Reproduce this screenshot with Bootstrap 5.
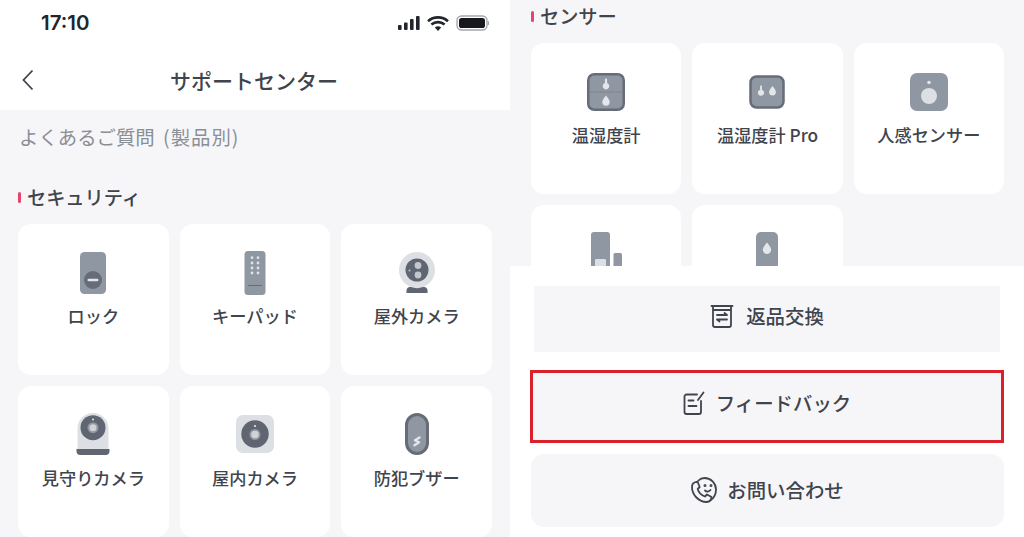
<!DOCTYPE html>
<html lang="ja">

<head>
    <meta charset="UTF-8">
    <meta name="viewport" content="width=device-width, initial-scale=1.0">
    <title>サポートセンター</title>
    <link href="https://cdn.jsdelivr.net/npm/bootstrap@5.3.2/dist/css/bootstrap.min.css" rel="stylesheet">
    <style>
        html, body { height: 537px; overflow: hidden; }
        body { background: #f6f6f9; color: #3f444d; font-family: "Noto Sans CJK JP", "Noto Sans", sans-serif; font-weight: 500; }
        .pane-left { width: 510px; height: 537px; overflow: hidden; }
        .pane-right { width: 514px; height: 537px; overflow: hidden; }
        .status-row { height: 46px; padding: 0 21px 0 41px; }
        .clock { font-family: Inter, sans-serif; font-size: 20.5px; font-weight: 600; color: #22252b; line-height: 1; }
        .nav-row { height: 64px; padding: 10px 0 6px 21px; }
        .nav-side { width: 112px; }
        .nav-title { width: 240px; margin-left: 1px; font-size: 21px; line-height: 1; }
        .faq-title { font-size: 19.4px; font-weight: 400; line-height: 27px; color: #8a8e96; padding: 13px 0 0 19px; word-spacing: 4px; }
        .faq-kind { letter-spacing: 1px; }
        .sec-title { font-size: 19.2px; line-height: 24px; margin-bottom: 15px; }
        .sec-tick { width: 3px; height: 11px; border-radius: 2px; background: #e8436b; margin-right: 6px; }
        .left-body { padding: 35px 18px 0; }
        .right-top { height: 266px; overflow: hidden; padding: 4px 20px 0 21px; }
        .tile-grid { display: grid; grid-template-columns: repeat(3, 1fr); gap: 11px; }
        .tile { height: 151px; border: 0; border-radius: 13px; padding-top: 26px; background: #fff; }
        .tile svg { display: block; flex: none; }
        .tile-label { font-size: 17.2px; line-height: 24px; margin-top: 6px; color: #3f444d; }
        .sheet { height: 271px; padding-top: 20px; }
        .act { height: 73px; background: #f6f6f9; font-size: 19.4px; line-height: 1; color: #3f444d; }
        .act-return { height: 66px; margin: 0 24px 18px; gap: 12px; padding-bottom: 6px; }
        .act-feedback { margin: 0 20px 11px; gap: 11px; border: 3px solid #d9202b; padding-bottom: 8px; }
        .act-contact { margin: 0 20px 0 21px; gap: 10px; border-radius: 13px; padding-bottom: 2px; }
    </style>
</head>

<body>
    <div class="d-flex">
        <div class="pane-left">
            <div class="bg-white">
                <div class="status-row d-flex align-items-center justify-content-between">
                    <span class="clock">17:10</span>
                    <svg width="92" height="18" viewBox="0 0 92 18">
                        <g fill="#22252b">
                            <rect x="1" y="11" width="3.600" height="5" rx="1"/>
                            <rect x="7" y="8.500" width="3.600" height="7.500" rx="1"/>
                            <rect x="13" y="5" width="3.600" height="11" rx="1"/>
                            <rect x="19" y="2" width="3.600" height="14" rx="1"/>
                        </g>
                        <path d="M31 7.200a15 15 0 0 1 20 0M34.400 10.600a10 10 0 0 1 13.200 0" fill="none" stroke="#22252b" stroke-width="2.600"/>
                        <path d="M37.800 13.600a5 5 0 0 1 6.400 0L41 17z" fill="#22252b"/>
                        <rect x="60" y="2" width="30" height="14" rx="4.500" fill="none" stroke="#a5a7ab" stroke-width="1.400"/>
                        <rect x="62" y="4" width="26" height="10" rx="2.600" fill="#16181c"/>
                        <rect x="90.800" y="7" width="1.200" height="4" rx=".6" fill="#a5a7ab"/>
                    </svg>
                </div>
                <div class="nav-row d-flex align-items-center">
                    <div class="nav-side d-flex">
                        <svg width="13" height="22" viewBox="0 0 13 22"><path d="M11.500 1.500 2.500 11l9 9.500" fill="none" stroke="#3f444d" stroke-width="1.800"/></svg>
                    </div>
                    <div class="nav-title text-center">サポートセンター</div>
                </div>
            </div>

            <div class="faq-title">よくあるご質問 <span class="faq-kind">(製品別)</span></div>

            <div class="left-body">
                <div class="sec-title d-flex align-items-center"><span class="sec-tick"></span>セキュリティ</div>
                <div class="tile-grid">
                    <div class="card tile align-items-center">
                        <svg width="48" height="48" viewBox="0 0 48 48">
                            <rect x="11" y="2" width="26" height="42" rx="4.500" fill="#8f97a3"/>
                            <circle cx="24" cy="30" r="9" fill="#666d79"/>
                            <rect x="18.500" y="28.700" width="11" height="2.600" rx="1.300" fill="#e4e6e9"/>
                        </svg>
                        <div class="tile-label">ロック</div>
                    </div>
                    <div class="card tile align-items-center">
                        <svg width="48" height="48" viewBox="0 0 48 48">
                            <rect x="13.500" y="1" width="21" height="44" rx="3.500" fill="#8f97a3"/>
                            <g fill="#dfe2e6">
                                <circle cx="21" cy="7.700" r="1.400"/><circle cx="27" cy="7.700" r="1.400"/>
                                <circle cx="21" cy="13" r="1.400"/><circle cx="27" cy="13" r="1.400"/>
                                <circle cx="21" cy="18" r="1.400"/><circle cx="27" cy="18" r="1.400"/>
                                <circle cx="21" cy="23" r="1.400"/><circle cx="27" cy="23" r="1.400"/>
                            </g>
                            <rect x="17" y="35" width="14" height="1" fill="#666d79"/>
                        </svg>
                        <div class="tile-label">キーパッド</div>
                    </div>
                    <div class="card tile align-items-center">
                        <svg width="48" height="48" viewBox="0 0 48 48">
                            <circle cx="24" cy="20" r="18" fill="#dcdfe3"/>
                            <circle cx="24" cy="20" r="11.500" fill="#5f6571"/>
                            <circle cx="25" cy="15.500" r="3.400" fill="#c3c7cd"/>
                            <circle cx="25" cy="25" r="3.400" fill="#c3c7cd"/>
                            <circle cx="16.500" cy="20.500" r="1" fill="#c3c7cd"/>
                            <path d="M13.500 43v-2.500c0-2 1.500-3.500 3.500-3.500h1c4 1.500 8 1.500 12 0h1c2 0 3.500 1.500 3.500 3.500V43z" fill="#5f6571"/>
                        </svg>
                        <div class="tile-label">屋外カメラ</div>
                    </div>
                    <div class="card tile align-items-center">
                        <svg width="48" height="48" viewBox="0 0 48 48">
                            <path d="M8.500 38V16.500a15.500 15.500 0 0 1 31 0V38z" fill="#dcdfe3"/>
                            <path d="M7.500 37h33v2a4 4 0 0 1-4 4h-25a4 4 0 0 1-4-4z" fill="#5f6571"/>
                            <circle cx="24" cy="15.700" r="12.500" fill="#5f6571"/>
                            <circle cx="24" cy="15.700" r="5.500" fill="#9298a3"/>
                            <circle cx="24" cy="15.700" r="3.500" fill="#cfd2d7"/>
                            <circle cx="24" cy="7.500" r="1" fill="#e4e6e9"/>
                        </svg>
                        <div class="tile-label">見守りカメラ</div>
                    </div>
                    <div class="card tile align-items-center">
                        <svg width="48" height="48" viewBox="0 0 48 48">
                            <rect x="5" y="3" width="38" height="38" rx="7" fill="#dcdfe3"/>
                            <circle cx="24" cy="22" r="13.700" fill="#5f6571"/>
                            <circle cx="24" cy="22.500" r="5.500" fill="#9298a3"/>
                            <circle cx="24" cy="22.500" r="3.800" fill="#cfd2d7"/>
                            <circle cx="24" cy="14" r="1.100" fill="#e4e6e9"/>
                        </svg>
                        <div class="tile-label">屋内カメラ</div>
                    </div>
                    <div class="card tile align-items-center">
                        <svg width="48" height="48" viewBox="0 0 48 48">
                            <rect x="13.500" y="2.500" width="21" height="39" rx="10.500" fill="#8f97a3" stroke="#666d79" stroke-width="3"/>
                            <path d="M26.500 25.500 22 28.300l4 2-4.500 3" fill="none" stroke="#e4e6e9" stroke-width="2.400" stroke-linejoin="round" stroke-linecap="round"/>
                        </svg>
                        <div class="tile-label">防犯ブザー</div>
                    </div>
                </div>
            </div>
        </div>

        <div class="pane-right">
            <div class="right-top">
                <div class="sec-title d-flex align-items-center"><span class="sec-tick"></span>センサー</div>
                <div class="tile-grid">
                    <div class="card tile align-items-center">
                        <svg width="48" height="48" viewBox="0 0 48 48">
                            <rect x="6.250" y="5.250" width="35.500" height="35.500" rx="6" fill="#8f97a3" stroke="#666d79" stroke-width="2.500"/>
                            <rect x="7" y="22.500" width="34" height="1" fill="#7d8591"/>
                            <path d="M24 9.500c.9 0 1.100.6 1.100 1.500v3a3.300 3.300 0 1 1-2.200 0v-3c0-.9.200-1.500 1.100-1.500z" fill="#e4e6e9"/>
                            <path d="M24 26.500c2 2.700 3.700 4.500 3.700 6.500a3.700 3.700 0 0 1-7.400 0c0-2 1.700-3.800 3.700-6.500z" fill="#e4e6e9"/>
                        </svg>
                        <div class="tile-label">温湿度計</div>
                    </div>
                    <div class="card tile align-items-center">
                        <svg width="48" height="48" viewBox="0 0 48 48">
                            <rect x="7.500" y="7.500" width="33" height="31" rx="6" fill="#8f97a3" stroke="#666d79" stroke-width="2.500"/>
                            <path d="M18 16.500c.7 0 .9.500.9 1.200v3a3.100 3.100 0 1 1-1.800 0v-3c0-.7.200-1.200.9-1.200z" fill="#e4e6e9"/>
                            <path d="M29.500 17c1.900 2.600 3.400 4.200 3.400 6a3.400 3.400 0 0 1-6.800 0c0-1.800 1.500-3.400 3.400-6z" fill="#e4e6e9"/>
                        </svg>
                        <div class="tile-label">温湿度計 Pro</div>
                    </div>
                    <div class="card tile align-items-center">
                        <svg width="48" height="48" viewBox="0 0 48 48">
                            <rect x="5" y="4" width="38" height="38" rx="7" fill="#8f97a3"/>
                            <circle cx="24" cy="13.500" r="1.800" fill="#e4e6e9"/>
                            <circle cx="24" cy="27" r="8" fill="#dcdfe3"/>
                        </svg>
                        <div class="tile-label">人感センサー</div>
                    </div>
                    <div class="card tile align-items-center">
                        <svg width="48" height="48" viewBox="0 0 48 48">
                            <rect x="9" y="1" width="19" height="47" rx="3" fill="#8f97a3"/>
                            <rect x="13" y="28" width="11" height="20" rx="1" fill="#dcdfe3"/>
                            <rect x="31.500" y="22" width="8.500" height="26" rx="1.500" fill="#8f97a3"/>
                        </svg>
                    </div>
                    <div class="card tile align-items-center">
                        <svg width="48" height="48" viewBox="0 0 48 48">
                            <rect x="13" y="1" width="22" height="47" rx="5" fill="#8f97a3"/>
                            <path d="M24 11.500c2.300 3 4.200 5 4.200 7.300a4.200 4.200 0 0 1-8.400 0c0-2.300 1.900-4.300 4.200-7.300z" fill="#e4e6e9"/>
                        </svg>
                    </div>
                </div>
            </div>

            <div class="sheet bg-white">
                <div class="act act-return d-flex align-items-center justify-content-center">
                    <svg width="24" height="24" viewBox="0 0 24 24" fill="none" stroke="#3f444d" stroke-width="1.800" stroke-linecap="round" stroke-linejoin="round">
                        <path d="M1.500 2h21M3 2v19a2 2 0 0 0 2 2h14a2 2 0 0 0 2-2V2M3 6h18"/>
                        <path d="M7 11h10l-2.500-2M17 15.500H7l2.500 2"/>
                    </svg>
                    <span>返品交換</span>
                </div>
                <div class="act act-feedback d-flex align-items-center justify-content-center">
                    <svg width="22" height="24" viewBox="0 0 22 24" fill="none" stroke="#3f444d" stroke-width="1.800" stroke-linecap="round" stroke-linejoin="round">
                        <path d="M14 3.500H3.500a2 2 0 0 0-2 2V21a2 2 0 0 0 2 2H16a2 2 0 0 0 2-2V10"/>
                        <path d="M15 9 20.500 1.500"/>
                        <path d="M5.500 9.500h5M5.500 15h8"/>
                    </svg>
                    <span>フィードバック</span>
                </div>
                <div class="act act-contact d-flex align-items-center justify-content-center">
                    <svg width="26" height="26" viewBox="0 0 26 26" fill="none" stroke="#3f444d" stroke-width="1.800" stroke-linecap="round" stroke-linejoin="round">
                        <path d="M7.500 3.500C9 1.900 11 1 13.500 1 19.800 1 25 6.200 25 12.500c0 4.500-2 8.500-5.500 10.700"/>
                        <path d="M6.500 4.500 3.500 5.500C1.800 6.200 1 8 1 10c0 8 7 15 14.500 15 2 0 3.500-.7 4.500-2.500l.5-2.500-4.500-2.500-2 2C10 18 7.500 15 6.700 12l2-2z"/>
                        <circle cx="14" cy="8.500" r=".6"/>
                        <circle cx="20" cy="8.500" r=".6"/>
                        <path d="M14 13.500c1.500 1.500 4 1.500 5.500-.5"/>
                    </svg>
                    <span>お問い合わせ</span>
                </div>
            </div>
        </div>
    </div>

    <script src="https://cdn.jsdelivr.net/npm/bootstrap@5.3.2/dist/js/bootstrap.bundle.min.js"></script>
</body>

</html>
